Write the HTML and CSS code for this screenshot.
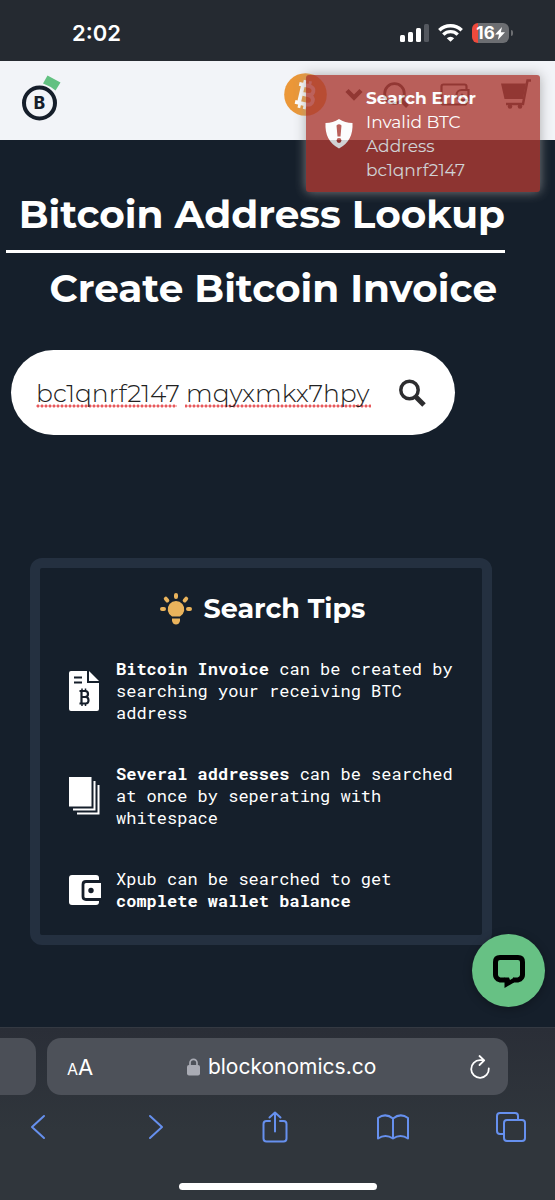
FILE: index.html
```html
<!DOCTYPE html>
<html lang="en">

<head>
  <meta charset="UTF-8">
  <meta name="viewport" content="width=device-width, initial-scale=1.0">
  <title>Bitcoin Address Lookup</title>
  <link rel="stylesheet" href="styles.css">
</head>

<body>
  <div class="status-bar">
    <span class="status-time">2:02</span>
    <div class="status-icons">
      <svg width="29" height="18" viewBox="0 0 29 18" fill="#fff">
        <rect x="0" y="11" width="5" height="7" rx="1.5" />
        <rect x="8" y="8" width="5" height="10" rx="1.5" />
        <rect x="16" y="4" width="5" height="14" rx="1.5" />
        <rect x="24" y="0" width="5" height="18" rx="1.5" fill="#54585f" />
      </svg>
      <svg width="25" height="18" viewBox="0 0 25 18" fill="none" stroke="#fff" stroke-width="3.4">
        <path d="M1.3 6.3a16 16 0 0 1 22.4 0" />
        <path d="M5.3 10.6a10.3 10.3 0 0 1 14.4 0" />
        <path d="M12.5 17.8l-3.7-3.6a5.2 5.2 0 0 1 7.4 0z" fill="#fff" stroke="none" />
      </svg>
      <div class="battery">
        <span>16</span>
        <svg width="10" height="13" viewBox="0 0 10 13" fill="#fff">
          <path d="M7 0L0 7.400h4L2.800 13 10 5.300H5.800z" />
        </svg>
      </div>
    </div>
  </div>

  <header class="site-header">
    <a class="logo" href="#" aria-label="Blockonomics">
      <svg width="40" height="46" viewBox="0 0 40 46">
        <path d="M25.500 -2.500L38.500 4.500 33.500 12.500Q28 8 21 5.500z" fill="#62c181" />
        <circle cx="17.500" cy="25" r="15.500" fill="none" stroke="#151e2a" stroke-width="4" />
        <text class="logo-letter" x="17.500" y="31" text-anchor="middle">B</text>
      </svg>
    </a>
    <nav class="header-nav">
      <button class="nav-button currency-button" type="button" aria-label="Currency">
        <svg width="43" height="43" viewBox="0 0 43 43">
          <circle cx="21.500" cy="21.500" r="21.300" fill="#eb9738" />
          <g transform="rotate(13 21.5 21.5)" fill="none" stroke="#fff">
            <path d="M13 12.500h9.500q6 0 6 4.500t-6 4.500H17h7q6 0 6 4.800t-6 4.700H13M17 12.500V31" stroke-width="3.800" />
            <path d="M18 7.500v5M23.500 7.500v5M18 31v5M23.500 31v5" stroke-width="2.800" />
          </g>
        </svg>
        <svg width="18" height="13" viewBox="0 0 18 13" fill="none" stroke="#2b2f36" stroke-width="4.500">
          <path d="M2 2.500l7 7 7-7" />
        </svg>
      </button>
      <button class="nav-button" type="button" aria-label="Search">
        <svg width="26" height="26" viewBox="0 0 26 26" fill="none" stroke="#2b2f36" stroke-width="2.800">
          <circle cx="11.500" cy="11.500" r="9.800" />
          <path d="M18.500 18.500l6 6" stroke-width="4" />
        </svg>
      </button>
      <button class="nav-button" type="button" aria-label="Wallet">
        <svg width="30" height="24" viewBox="0 0 30 24" fill="none" stroke="#2b2f36" stroke-width="2.200">
          <path d="M26.500 7V3.500q0-2-2-2H3.500q-2 0-2 2v16q0 2 2 2h21q2 0 2-2V17" />
          <path d="M28.500 7h-7a5 5 0 0 0 0 10h7z" />
          <circle cx="22" cy="12" r="1.500" fill="#2b2f36" stroke="none" />
        </svg>
      </button>
      <button class="nav-button" type="button" aria-label="Cart">
        <svg width="30" height="31" viewBox="0 0 30 31" fill="#2b2f36">
          <path d="M0 4.500h25L22 20H3.500z" />
          <path d="M30 1.500H26.500L22 25H5" fill="none" stroke="#2b2f36" stroke-width="2.500" />
          <circle cx="9" cy="27.500" r="2.300" />
          <circle cx="19" cy="27.500" r="2.300" />
        </svg>
      </button>
    </nav>
    <div class="toast" role="alert">
      <svg class="toast-icon" width="28" height="30" viewBox="0 0 28 30">
        <path d="M14 0q6 4 13.500 4Q28.500 22 14 29.500-.5 22 .5 4 8 4 14 0z" fill="#fff" />
        <path d="M11.500 6.500q2.500-2.500 5 0l-1 11h-3z" fill="#ac3a33" />
        <circle cx="14" cy="21.500" r="2.400" fill="#ac3a33" />
      </svg>
      <div class="toast-text">
        <strong>Search Error</strong>
        <p>Invalid BTC Address bc1qnrf2147</p>
      </div>
    </div>
  </header>

  <main class="content">
    <div class="titles">
      <h1 class="title title-active">Bitcoin Address Lookup</h1>
      <h1 class="title">Create Bitcoin Invoice</h1>
    </div>

    <form class="search-box">
      <input class="search-input" type="text" aria-label="Bitcoin address" spellcheck="false"
        value="bc1qnrf2147 mqyxmkx7hpyk">
      <button class="search-button" type="button" aria-label="Search">
        <svg width="27" height="28" viewBox="0 0 27 28" fill="none" stroke="#2d2d2f">
          <circle cx="10.500" cy="11" r="8.700" stroke-width="3.500" />
          <path d="M16.500 17.500l8.500 8.500" stroke-width="5" />
        </svg>
      </button>
    </form>

    <section class="tips">
      <h2 class="tips-title">
        <svg width="32" height="32" viewBox="0 0 32 32" fill="#e9b35c">
          <path d="M12 23.500a8.300 8.300 0 1 1 8 0z" />
          <path d="M12 25.500h8v2.500q-1 3.500-4 3.500t-4-3.500z" />
          <path d="M16 2v2M5.800 5.700l1.500 1.800M26.200 5.700l-1.500 1.800M2 16h2M28 16h2" fill="none" stroke="#e9b35c"
            stroke-width="4" stroke-linecap="round" />
        </svg>
        Search Tips
      </h2>
      <ul class="tips-list">
        <li class="tip">
          <svg width="32" height="40" viewBox="0 0 32 40">
            <path d="M2 0h16v12h12v26q0 2-2 2H2q-2 0-2-2V2q0-2 2-2z" fill="#fff" />
            <path d="M20 0l10 10H20z" fill="#fff" />
            <g fill="none" stroke="#151e2a">
              <path d="M5 6.500h8M5 11.500h8" stroke-width="2" />
              <path d="M10.500 20h5.500q3 0 3 3t-3 3h-3.500 4q3 0 3 3.300t-3 3.200h-6M12.500 20v12.500" stroke-width="2.200" />
              <path d="M13 17.500v3M16.500 17.500v3M13 32v3M16.500 32v3" stroke-width="1.500" />
            </g>
          </svg>
          <p><b>Bitcoin Invoice</b> can be created by searching your receiving BTC address</p>
        </li>
        <li class="tip">
          <svg width="32" height="38" viewBox="0 0 32 38" fill="none" stroke="#fff" stroke-width="2">
            <rect width="22.500" height="29.500" fill="#fff" stroke="none" />
            <path d="M25.500 4v28.500H4M29.500 8v28.500H8" />
          </svg>
          <p><b>Several addresses</b> can be searched at once by seperating with whitespace</p>
        </li>
        <li class="tip">
          <svg width="32" height="30" viewBox="0 0 32 30">
            <rect width="30" height="30" rx="3" fill="#fff" />
            <path d="M32 6.500H17q-3 0-3 3v12q0 3 3 3h15" fill="#fff" stroke="#151e2a" stroke-width="2.800" />
            <circle cx="22" cy="15.500" r="2.700" fill="#151e2a" />
          </svg>
          <p>Xpub can be searched to get <b>complete wallet balance</b></p>
        </li>
      </ul>
    </section>

    <button class="chat-button" type="button" aria-label="Chat">
      <svg width="36" height="36" viewBox="0 0 36 36" fill="none" stroke="#000" stroke-width="5">
        <path d="M14 27H9q-4.500-1.500-4.500-5V9Q4.500 4.500 9 4.500h18q4.500 0 4.500 4.500v13q0 3.500-4.500 5h-5" />
        <path d="M13.500 24.500h4.500l1 2.500 4-2.500v5L13.500 35z" fill="#000" stroke="none" />
      </svg>
    </button>
  </main>

  <footer class="browser-bar">
    <div class="tabs">
      <div class="tab-previous"></div>
      <div class="address">
        <button class="text-size" type="button" aria-label="Text size"><small>A</small>A</button>
        <a class="domain" href="#">
          <svg width="13" height="18" viewBox="0 0 13 18">
            <rect y="7" width="13" height="10.500" rx="2" fill="#a9abb4" />
            <path d="M3 8V4.800a3.500 3.500 0 0 1 7 0V8" fill="none" stroke="#a9abb4" stroke-width="1.700" />
          </svg>
          blockonomics.co
        </a>
        <button class="reload" type="button" aria-label="Reload">
          <svg width="20" height="24" viewBox="0 0 20 24" fill="none" stroke="#fff" stroke-width="1.800"
            stroke-linecap="round" stroke-linejoin="round">
            <path d="M18.800 13.500a8.800 8.800 0 1 1-8.800-8.300h4M9.500 1l4.700 4.300-4.700 4.700" />
          </svg>
        </button>
      </div>
    </div>
    <div class="toolbar">
      <button type="button" aria-label="Back">
        <svg width="16" height="26" viewBox="0 0 16 26">
          <path d="M14 2L2 13l12 11" />
        </svg>
      </button>
      <button type="button" aria-label="Forward">
        <svg width="16" height="26" viewBox="0 0 16 26">
          <path d="M2 2l12 11L2 24" />
        </svg>
      </button>
      <button type="button" aria-label="Share">
        <svg width="26" height="32" viewBox="0 0 26 32">
          <path d="M8 10H4.500q-3 0-3 3v14.500q0 3 3 3h17q3 0 3-3V13q0-3-3-3H18M13 20.500V1.500M7.500 6.500l5.500-5 5.500 5" />
        </svg>
      </button>
      <button type="button" aria-label="Bookmarks">
        <svg width="32" height="27" viewBox="0 0 32 27">
          <path d="M16 4.500Q8.500-1.500 1 4v20.500q7.500-5 15 0 7.500-5 15 0V4Q23.500-1.500 16 4.500zv20" />
        </svg>
      </button>
      <button type="button" aria-label="Tabs">
        <svg width="30" height="30" viewBox="0 0 30 30">
          <rect x="8" y="8" width="21" height="21" rx="3" />
          <path d="M8 22H4q-3 0-3-3V4q0-3 3-3h15q3 0 3 3v4" />
        </svg>
      </button>
    </div>
    <div class="home-indicator"></div>
  </footer>
</body>

</html>
```
FILE: styles.css
```css
* {
  box-sizing: border-box;
}

body {
  margin: 0;
  min-height: 100vh;
  display: flex;
  flex-direction: column;
  background-color: #151f2b;
  color: #fff;
  font-family: Montserrat, Inter, sans-serif;
}

h1,
h2,
p,
ul {
  margin: 0;
  padding: 0;
}

button {
  padding: 0;
  border: 0;
  background: none;
  color: inherit;
  font-family: inherit;
  cursor: pointer;
}

svg {
  display: block;
  flex-shrink: 0;
  overflow: visible;
}

/* status bar */
.status-bar {
  height: 61px;
  padding: 5px 46px 0 72px;
  display: flex;
  align-items: center;
  justify-content: space-between;
  background-color: #252a31;
}

.status-time {
  font: 600 22px Inter, sans-serif;
}

.status-icons {
  display: flex;
  align-items: center;
  gap: 9px;
}

.battery {
  position: relative;
  width: 37px;
  height: 20px;
  display: flex;
  align-items: center;
  justify-content: center;
  border-radius: 6px;
  background: linear-gradient(90deg, #ee4a3c 6px, #6c6e72 6px);
  font: 700 17px Inter, sans-serif;
}

.battery::after {
  content: "";
  position: absolute;
  right: -4px;
  top: 7px;
  width: 2px;
  height: 6px;
  border-radius: 0 2px 2px 0;
  background-color: #6c6e72;
}

/* header */
.site-header {
  position: relative;
  height: 79px;
  padding: 0 24px 0 22px;
  display: flex;
  align-items: center;
  justify-content: space-between;
  background-color: #f2f4f8;
}

.logo-letter {
  font: 800 17px Inter, sans-serif;
  fill: #151e2a;
}

.header-nav {
  display: flex;
  align-items: center;
  gap: 31px;
  padding-bottom: 12px;
}

.nav-button {
  display: flex;
  align-items: center;
}

.currency-button {
  gap: 18px;
  margin-right: -11px;
}

.toast {
  position: absolute;
  top: 14px;
  right: 15px;
  z-index: 2;
  width: 234px;
  height: 117px;
  padding: 0 19px;
  display: flex;
  align-items: center;
  gap: 13px;
  border-radius: 3px;
  background-color: #ac3a33;
  box-shadow: 0 0 12px #999;
  font-size: 17px;
  line-height: 24px;
  opacity: .8;
}

.toast-text p {
  font-weight: 400;
}

/* content */
.content {
  position: relative;
  flex: 1;
  padding: 44px 50px 82px 6px;
}

.titles {
  display: flex;
  flex-direction: column;
  gap: 5px;
}

.title {
  padding-right: 8px;
  font-size: 39px;
  font-weight: 700;
  line-height: 60px;
  text-align: right;
  white-space: nowrap;
}

.title-active {
  padding: 0 0 6px;
  border-bottom: 3px solid #fff;
}

.search-box {
  height: 85px;
  margin: 32px 50px 0 5px;
  padding: 0 29px 0 25px;
  display: flex;
  align-items: center;
  gap: 28px;
  border-radius: 43px;
  background-color: #fff;
}

/* dotted spelling underline with a break between the two words */
.search-input {
  flex: 1;
  min-width: 0;
  height: 32px;
  padding: 0;
  border: 0;
  outline: 0;
  background:
    linear-gradient(#fff, #fff) 141px 27px / 8px 4px no-repeat,
    radial-gradient(circle, #e8595c 1px, transparent 2px) 0 27px / 4px 4px repeat-x;
  color: #222;
  font-family: inherit;
  font-size: 25px;
  font-weight: 300;
}

/* tips */
.tips {
  margin: 123px 13px 0 24px;
  padding: 20px 26px 23px 29px;
  border: 10px solid #243040;
  border-radius: 12px;
}

.tips-title {
  display: flex;
  align-items: center;
  justify-content: center;
  gap: 12px;
  font-size: 27px;
  line-height: 42px;
}

.tips-list {
  margin-top: 28px;
  display: flex;
  flex-direction: column;
  gap: 39px;
  list-style: none;
}

.tip {
  display: flex;
  align-items: center;
  gap: 15px;
  font-family: "Roboto Mono", "Liberation Mono", monospace;
  font-size: 17px;
  line-height: 22px;
}

.chat-button {
  position: absolute;
  right: 10px;
  bottom: 20px;
  width: 73px;
  height: 73px;
  display: flex;
  align-items: center;
  justify-content: center;
  border-radius: 50%;
  background-color: #67c184;
  box-shadow: 0 2px 10px rgba(0, 0, 0, .3);
}

/* browser bar */
.browser-bar {
  padding: 10px 0;
  border-top: 1px solid #343942;
  background: linear-gradient(#2a2e37, #30363c 60%);
  font-family: Inter, sans-serif;
}

.tabs {
  display: flex;
  gap: 11px;
  padding-right: 47px;
}

.tab-previous {
  width: 36px;
  height: 57px;
  border-radius: 0 14px 14px 0;
  background-color: #4b4f57;
}

.address {
  flex: 1;
  padding: 0 18px 0 20px;
  display: flex;
  align-items: center;
  justify-content: space-between;
  border-radius: 14px;
  background-color: #4d5159;
}

.text-size {
  font-size: 22px;
}

.text-size small {
  font-size: 16px;
}

.domain {
  display: flex;
  align-items: center;
  gap: 8px;
  color: #fff;
  font-size: 21px;
  text-decoration: none;
}

.toolbar {
  height: 64px;
  padding: 0 28px 0 22px;
  display: flex;
  align-items: center;
  justify-content: space-between;
}

.toolbar button {
  width: 32px;
  display: flex;
  justify-content: center;
}

.toolbar svg {
  fill: none;
  stroke: #6690ee;
  stroke-width: 2;
  stroke-linecap: round;
  stroke-linejoin: round;
}

.home-indicator {
  width: 198px;
  height: 7px;
  margin: 24px auto 0;
  border-radius: 4px;
  background-color: #fff;
}
```
